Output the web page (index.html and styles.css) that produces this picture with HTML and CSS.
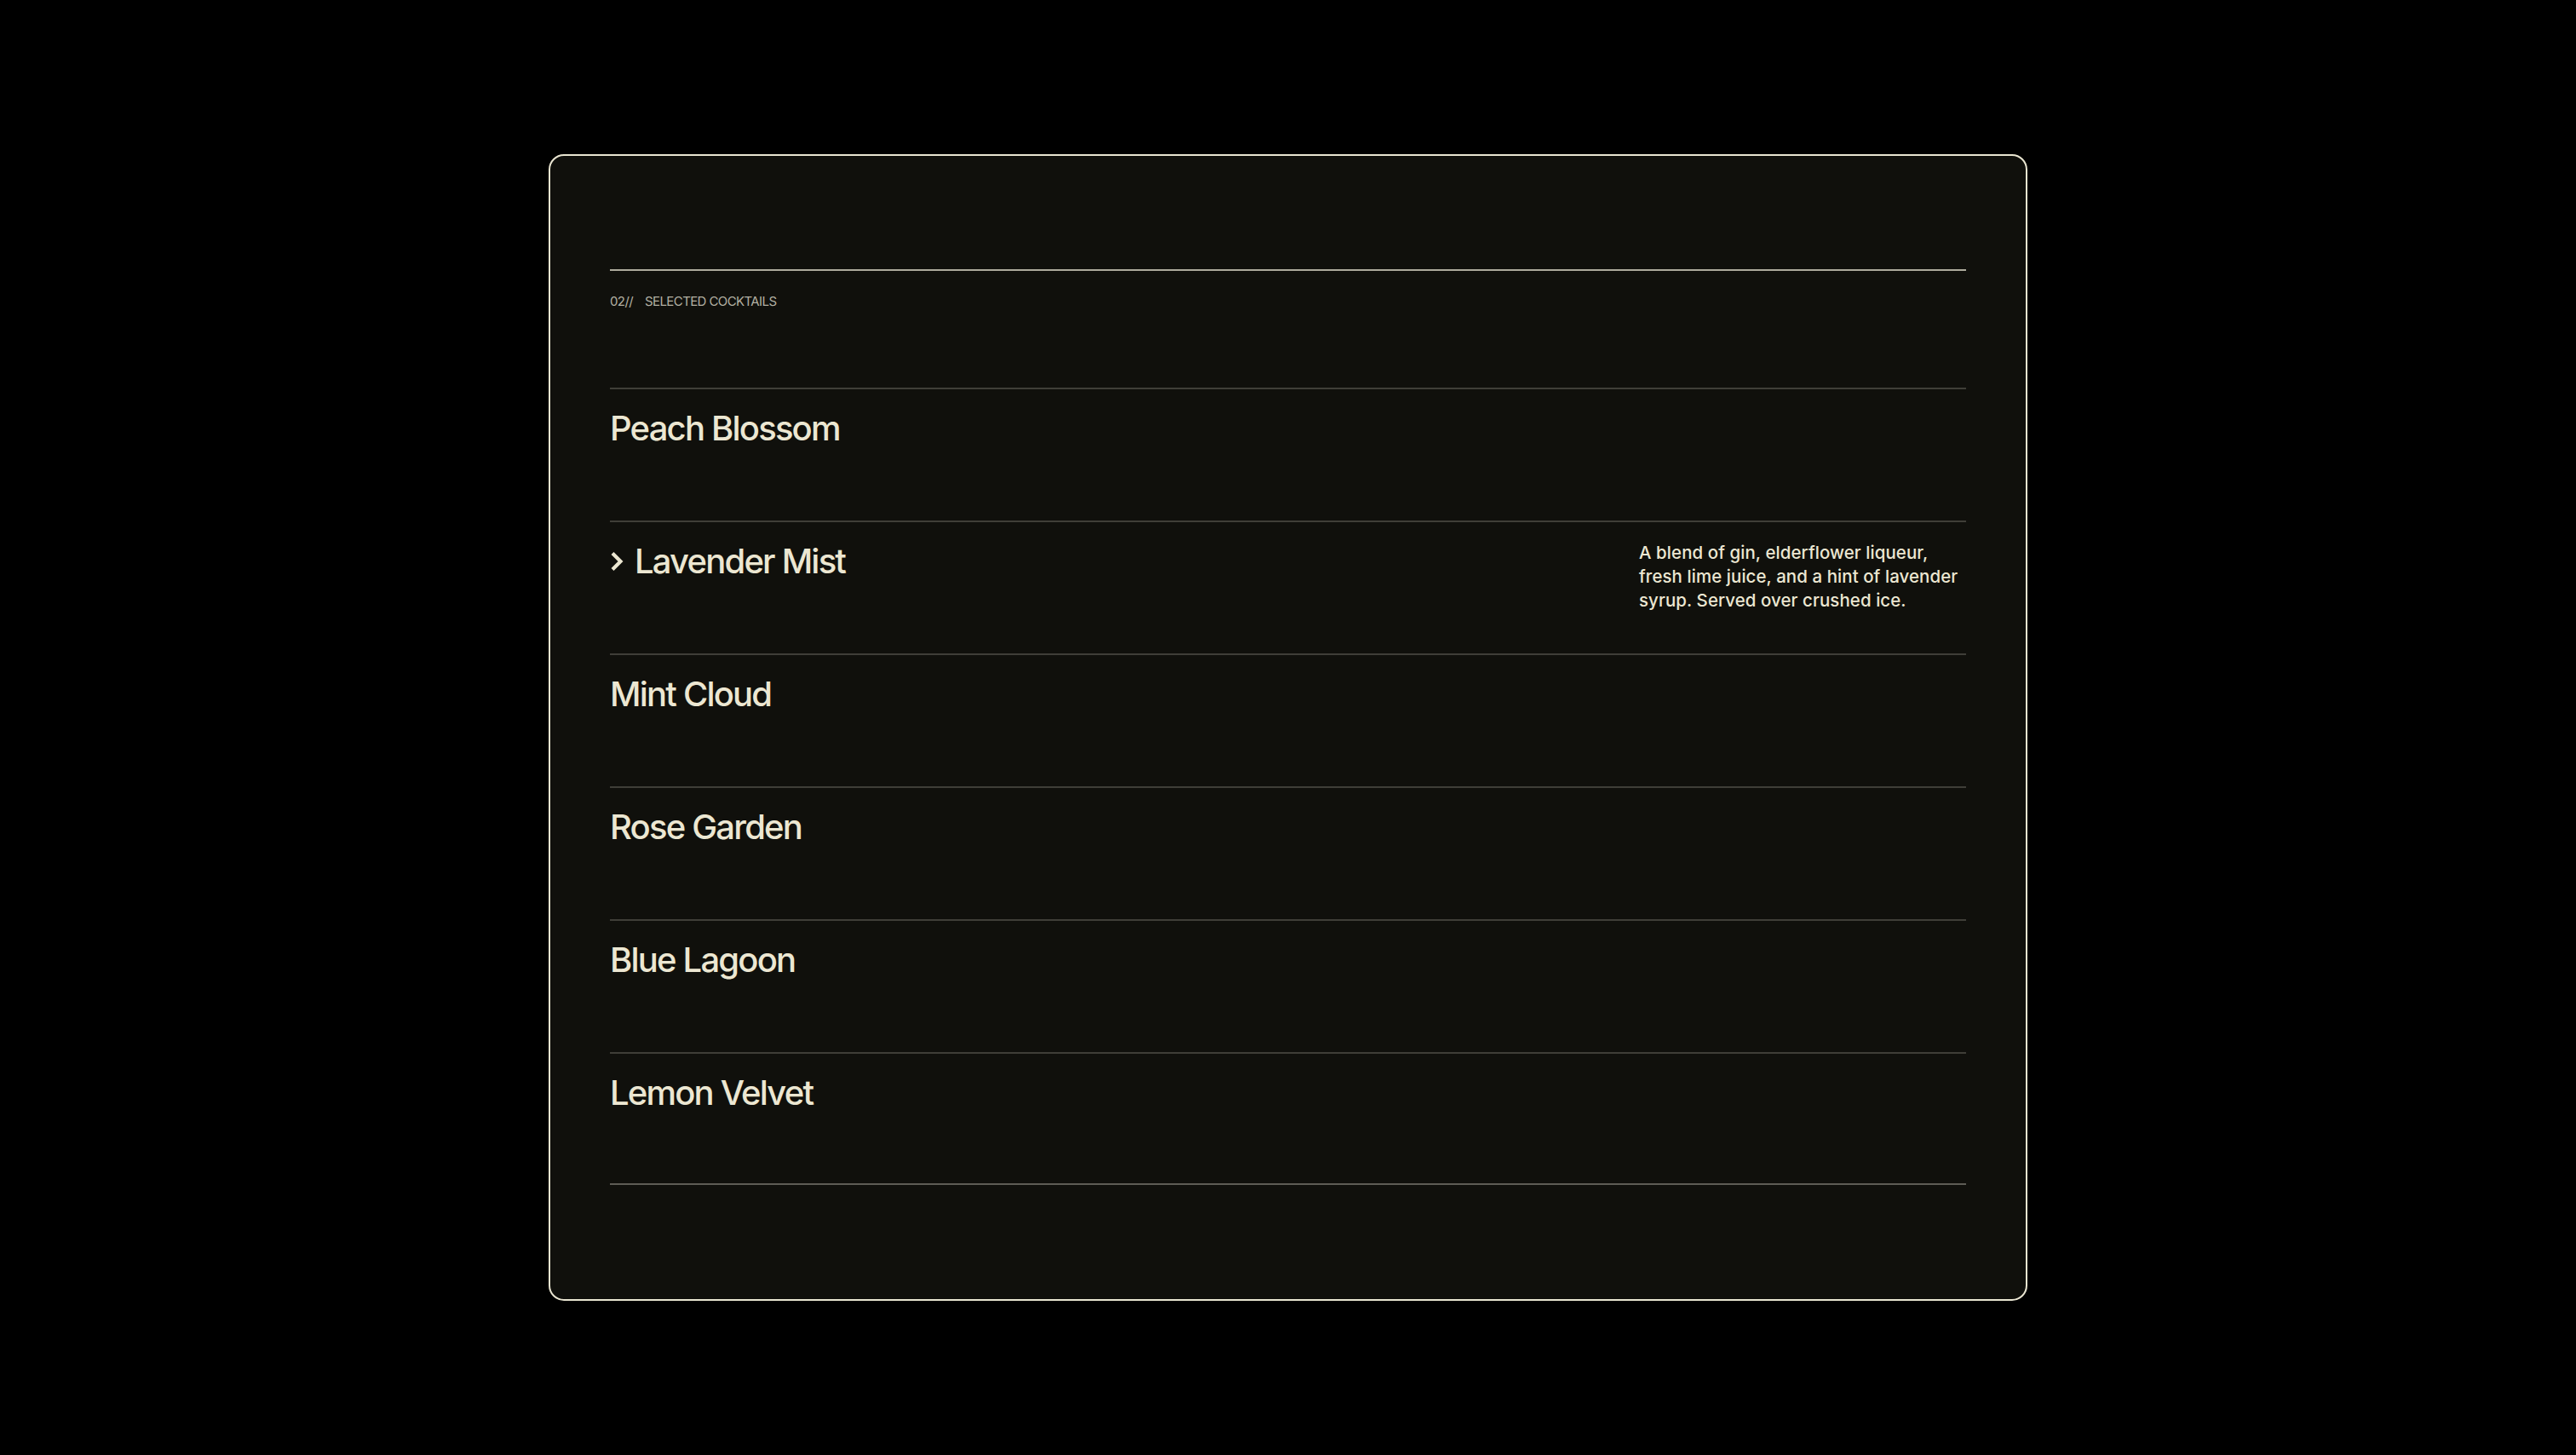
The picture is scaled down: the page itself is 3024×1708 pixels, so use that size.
FILE: index.html
```html
<!DOCTYPE html>
<html lang="en">
<head>
<meta charset="utf-8">
<title>Selected Cocktails</title>
<link rel="stylesheet" href="styles.css">
</head>
<body>
<main class="card">
  <header class="section-head">
    <span class="section-num">02//</span>
    <span class="section-title">SELECTED COCKTAILS</span>
  </header>
  <ul class="menu">
    <li class="item">
      <h2 class="item-name">Peach Blossom</h2>
    </li>
    <li class="item item-active">
      <h2 class="item-name">
        <svg class="chev" viewBox="0 0 16 24" width="16" height="24" aria-hidden="true"><path d="M3 2.5 L12.5 12 L3 21.5" fill="none" stroke="currentColor" stroke-width="4.2" stroke-linejoin="miter"/></svg>
        Lavender Mist
      </h2>
      <p class="item-desc">A blend of gin, elderflower liqueur, fresh lime juice, and a hint of lavender syrup. Served over crushed ice.</p>
    </li>
    <li class="item">
      <h2 class="item-name">Mint Cloud</h2>
    </li>
    <li class="item">
      <h2 class="item-name">Rose Garden</h2>
    </li>
    <li class="item">
      <h2 class="item-name">Blue Lagoon</h2>
    </li>
    <li class="item">
      <h2 class="item-name">Lemon Velvet</h2>
    </li>
  </ul>
</main>
</body>
</html>
```

FILE: styles.css
```css
* { box-sizing: border-box; }

html, body {
  margin: 0;
  padding: 0;
  background: #000000;
}

body {
  min-height: 100vh;
  display: flex;
  align-items: center;
  justify-content: center;
  font-family: Inter, "Noto Sans", "Liberation Sans", sans-serif;
  color: #ece7d2;
}

.card {
  width: 1736px;
  height: 1346px;
  background: #10100c;
  border: 2px solid #e9e5d1;
  border-radius: 18px;
  padding: 133px 70px 134px;
  display: flex;
  flex-direction: column;
}

.section-head {
  border-top: 2px solid #aeab9d;
  padding-top: 26px;
  display: flex;
  gap: 14px;
  font-size: 15px;
  line-height: 20px;
  color: #b3b0a3;
  letter-spacing: -0.6px;
}

.menu {
  list-style: none;
  margin: 91px 0 0;
  padding: 0;
  border-bottom: 2px solid #5e5c55;
}

.item {
  height: 156px;
  border-top: 2px solid #3f3e38;
  padding-top: 22px;
  display: flex;
  justify-content: space-between;
  align-items: flex-start;
}

.item:last-child {
  height: 154px;
}

.item-name {
  margin: 0;
  font-size: 40px;
  line-height: 48px;
  font-weight: 450;
  letter-spacing: -1.8px;
  color: #ece7d2;
  display: flex;
  align-items: center;
  gap: 13px;
}

.chev {
  width: 16px;
  height: 24px;
  flex: none;
}

.item-desc {
  margin: 0;
  width: 384px;
  font-size: 20.5px;
  line-height: 28px;
  font-weight: 450;
  letter-spacing: 0.05px;
  color: #ece7d2;
}
```
